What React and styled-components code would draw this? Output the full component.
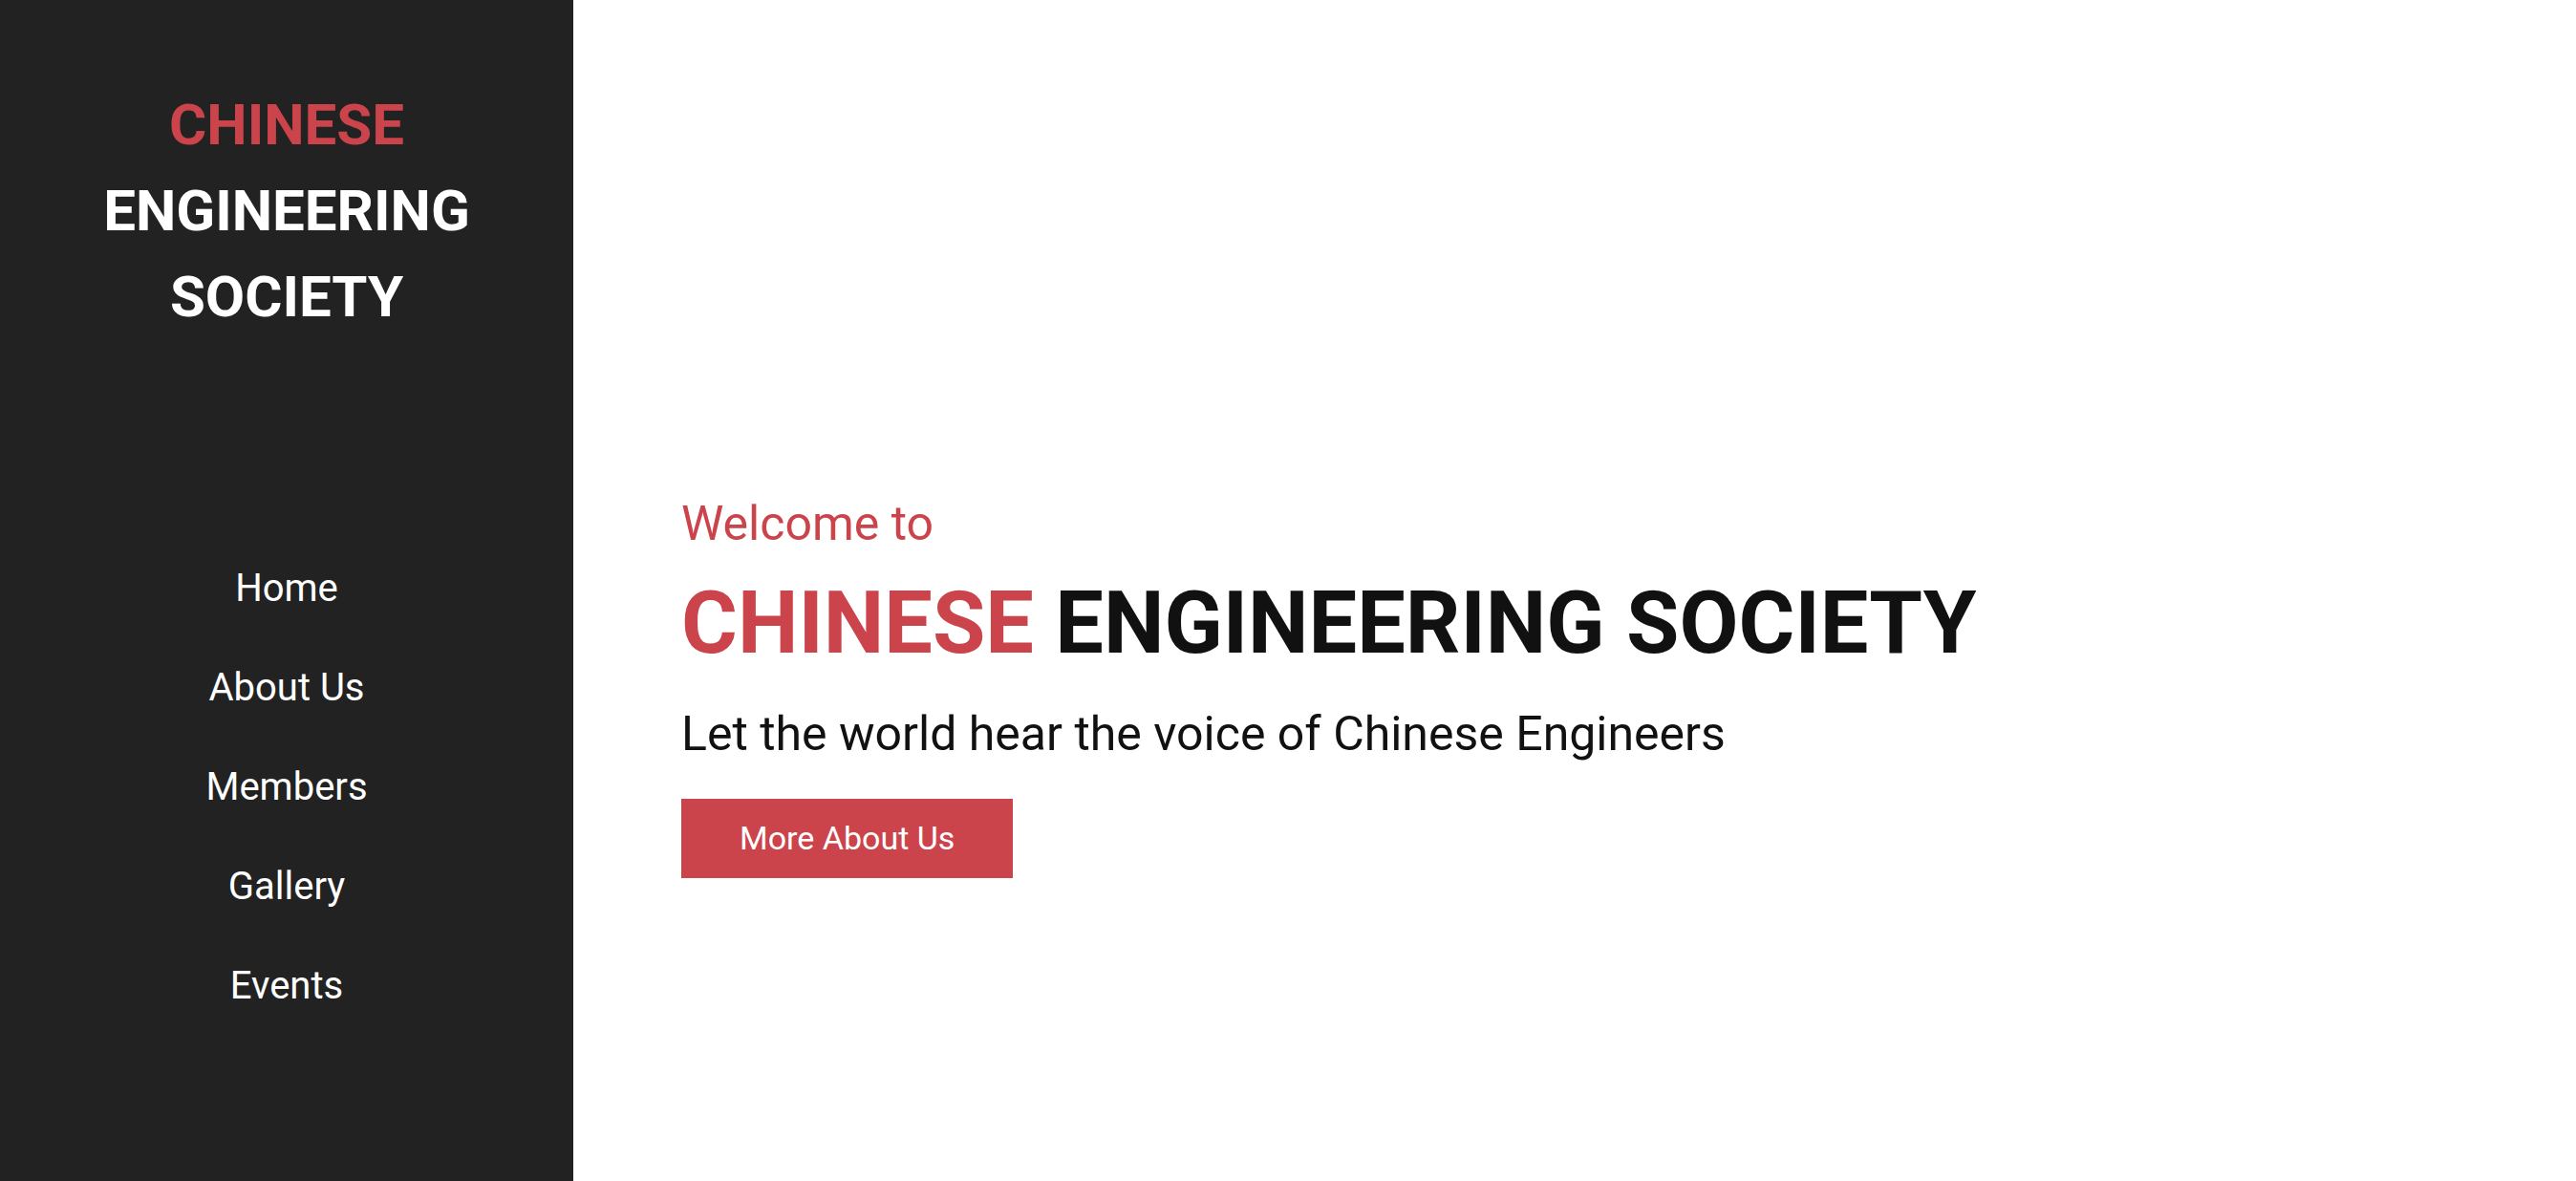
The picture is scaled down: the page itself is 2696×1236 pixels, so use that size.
import styled, { createGlobalStyle } from 'styled-components';

const GlobalStyle = createGlobalStyle`
  html, body {
    margin: 0;
    padding: 0;
    background: #fff;
    font-family: Roboto, "Liberation Sans", Arial, sans-serif;
  }
`;

const RED = '#cc444b';

const App = () => {
  const links = ['Home', 'About Us', 'Members', 'Gallery', 'Events'];

  return (
    <Page>
      <GlobalStyle />
      <Sidebar>
        <Logo>
          <Red>CHINESE</Red>
          <br />
          ENGINEERING
          <br />
          SOCIETY
        </Logo>
        <Nav>
          {links.map((l) => (
            <NavLink href="#" key={l}>{l}</NavLink>
          ))}
        </Nav>
      </Sidebar>
      <Main>
        <Welcome>Welcome to</Welcome>
        <Title>
          <Red>CHINESE</Red> ENGINEERING SOCIETY
        </Title>
        <Tagline>Let the world hear the voice of Chinese Engineers</Tagline>
        <Button>More About Us</Button>
      </Main>
    </Page>
  );
};

export default App;

const Page = styled.div`
  display: flex;
  min-height: 1236px;
`;

const Sidebar = styled.aside`
  width: 600px;
  flex-shrink: 0;
  background: #222222;
  display: flex;
  flex-direction: column;
  align-items: center;
  padding-top: 86px;
  box-sizing: border-box;
`;

const Logo = styled.div`
  font-size: 60px;
  line-height: 90px;
  font-weight: 700;
  color: #fff;
  text-align: center;
`;

const Red = styled.span`
  color: ${RED};
`;

const Nav = styled.nav`
  margin-top: 208px;
  display: flex;
  flex-direction: column;
  align-items: center;
`;

const NavLink = styled.a`
  color: #fff;
  text-decoration: none;
  font-size: 40px;
  line-height: 104px;
`;

const Main = styled.main`
  flex: 1;
  display: flex;
  flex-direction: column;
  align-items: flex-start;
  padding: 518px 0 0 113px;
`;

const Welcome = styled.p`
  margin: 0;
  color: ${RED};
  font-size: 50px;
  line-height: 60px;
`;

const Title = styled.h1`
  margin: 21px 0 0;
  font-size: 90px;
  line-height: 108px;
  font-weight: 700;
  color: #111;
`;

const Tagline = styled.p`
  margin: 31px 0 0;
  font-size: 50px;
  line-height: 60px;
  color: #111;
`;

const Button = styled.button`
  margin-top: 38px;
  border: none;
  background: ${RED};
  color: #fff;
  font-family: inherit;
  font-size: 34px;
  line-height: 43px;
  padding: 20px 61px;
  cursor: pointer;
`;
